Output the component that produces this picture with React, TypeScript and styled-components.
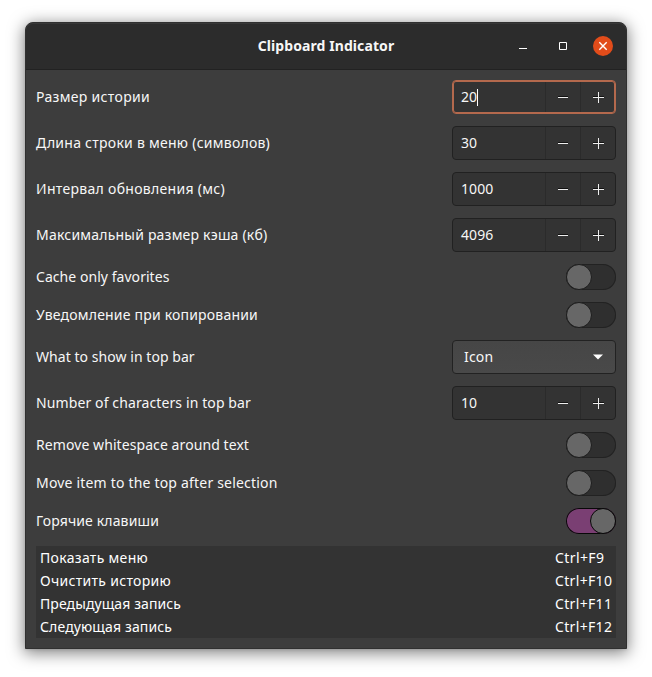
import React from 'react';
import styled, { createGlobalStyle, css } from 'styled-components';

const GlobalStyle = createGlobalStyle`
  * { box-sizing: border-box; }
  body {
    margin: 0;
    background: #fff;
    color: #f7f7f7;
    font: 14px/20px "Noto Sans", "Open Sans", sans-serif;
  }
`;

const Desktop = styled.div`
  width: 652px;
  height: 677px;
  padding: 22px 25px 28px;
  overflow: hidden;
`;

const Window = styled.main`
  height: 627px;
  display: flex;
  flex-direction: column;
  background: #3d3d3d;
  border: 1px solid #303030;
  border-radius: 8px 8px 0 0;
  box-shadow: 0 3px 16px 1px rgba(0, 0, 0, 0.5), 0 1px 3px rgba(0, 0, 0, 0.08);
`;

const TitleBar = styled.header`
  height: 47px;
  flex: none;
  display: grid;
  grid-template-columns: 1fr auto 1fr;
  align-items: center;
  padding-right: 13px;
  padding-left: 13px;
  background: #2c2c2c;
  border-bottom: 1px solid #222;
  border-radius: 7px 7px 0 0;
  box-shadow: inset 0 1px #383838;
`;

const Title = styled.h1`
  grid-column: 2;
  margin: 0;
  font-size: 14px;
  font-weight: 700;
  letter-spacing: 0.08px;
`;

const Controls = styled.div`
  display: flex;
  justify-content: flex-end;
  gap: 20px;
`;

const WindowButton = styled.button<{ $close?: boolean }>`
  width: 20px;
  height: 20px;
  padding: 0;
  border: 0;
  border-radius: 50%;
  background: ${(p) => (p.$close ? '#e24c1a' : 'transparent')};
  svg { display: block; }
`;

const Content = styled.section`
  display: flex;
  flex-direction: column;
  gap: 12px;
  padding: 10px;
`;

const Row = styled.div`
  display: flex;
  align-items: center;
  justify-content: space-between;
`;

const Text = styled.span<{ $tracking?: number }>`
  letter-spacing: ${(p) => p.$tracking ?? 0}px;
  white-space: nowrap;
`;

const SpinBox = styled.div<{ $focused?: boolean }>`
  width: 164px;
  height: 34px;
  display: grid;
  grid-template-columns: 1fr 35px 35px;
  background: #333;
  border: 1px solid #212121;
  border-radius: 4px;
  ${(p) =>
    p.$focused &&
    css`
      border-color: #b4694d;
      box-shadow: inset 0 0 0 1px #b4694d;
    `}
`;

const Value = styled.div`
  display: flex;
  align-items: center;
  padding-left: 8px;
`;

const Caret = styled.span`
  width: 1px;
  height: 17px;
  background: #fff;
`;

const StepButton = styled.button<{ $focused?: boolean }>`
  margin: ${(p) => (p.$focused ? '1px 0' : '0')};
  padding: 0;
  background: none;
  border: 0;
  border-left: 1px solid #2b2b2b;
  display: flex;
  align-items: center;
  justify-content: center;
  svg { display: block; }
`;

const Track = styled.div<{ $on?: boolean }>`
  width: 50px;
  height: 26px;
  display: flex;
  justify-content: ${(p) => (p.$on ? 'flex-end' : 'flex-start')};
  border-radius: 13px;
  background: ${(p) => (p.$on ? '#7a3f73' : '#2f2f2f')};
  box-shadow: inset 0 0 0 1px ${(p) => (p.$on ? '#080808' : '#222')};
`;

const Knob = styled.span<{ $on?: boolean }>`
  width: 26px;
  height: 26px;
  border-radius: 50%;
  background: #676767;
  border: 1px solid ${(p) => (p.$on ? '#080808' : '#1d1d1d')};
`;

const Select = styled.button`
  width: 164px;
  height: 34px;
  display: flex;
  align-items: center;
  justify-content: space-between;
  padding: 0 12px 0 11px;
  color: inherit;
  font: inherit;
  background: linear-gradient(#464646, #494949);
  border: 1px solid #222;
  border-radius: 4px;
`;

const Shortcuts = styled.div`
  background: #333;
`;

const Shortcut = styled.div`
  height: 23px;
  display: grid;
  grid-template-columns: 1fr 57px;
  align-items: center;
  padding: 0 4px;
  color: #fff;
`;

type SpinProps = { label: string; tracking: number; value: string; valueTracking?: number; focused?: boolean };

function SpinRow({ label, tracking, value, valueTracking = 0.1, focused }: SpinProps) {
  return (
    <Row>
      <Text $tracking={tracking}>{label}</Text>
      <SpinBox $focused={focused}>
        <Value>
          <Text $tracking={valueTracking}>{value}</Text>
          {focused && <Caret />}
        </Value>
        <StepButton $focused={focused} aria-label="-">
          <svg width="12" height="12" shapeRendering="crispEdges">
            <path d="M1 5.5h10" stroke="#111" />
            <path d="M1 6.5h10" stroke="#eee" />
          </svg>
        </StepButton>
        <StepButton $focused={focused} aria-label="+">
          <svg width="12" height="12" shapeRendering="crispEdges">
            <path d="M1 5.5h11" stroke="#111" />
            <path d="M1 6.5h11M6.5 1v11" stroke="#eee" />
          </svg>
        </StepButton>
      </SpinBox>
    </Row>
  );
}

function SwitchRow({ label, tracking, on }: { label: string; tracking: number; on?: boolean }) {
  return (
    <Row>
      <Text $tracking={tracking}>{label}</Text>
      <Track $on={on}>
        <Knob $on={on} />
      </Track>
    </Row>
  );
}

const shortcuts = [
  { name: 'Показать меню', tracking: 0.31, keys: 'Ctrl+F9', keyTracking: 0.4 },
  { name: 'Очистить историю', tracking: 0.3, keys: 'Ctrl+F10', keyTracking: 0.34 },
  { name: 'Предыдущая запись', tracking: 0.09, keys: 'Ctrl+F11', keyTracking: 0.34 },
  { name: 'Следующая запись', tracking: 0.13, keys: 'Ctrl+F12', keyTracking: 0.34 },
];

export default function App() {
  return (
    <>
      <GlobalStyle />
      <Desktop>
        <Window>
          <TitleBar>
            <Title>Clipboard Indicator</Title>
            <Controls>
              <WindowButton>
                <svg width="20" height="20"><path d="M6 12.5h8" stroke="#fff" /></svg>
              </WindowButton>
              <WindowButton>
                <svg width="20" height="20"><path d="M6.5 6.5h7v7h-7z" fill="none" stroke="#fff" /></svg>
              </WindowButton>
              <WindowButton $close>
                <svg width="20" height="20"><path d="M6.3 6.3l7.4 7.4M13.7 6.3l-7.4 7.4" stroke="#fff" strokeWidth="1.4" /></svg>
              </WindowButton>
            </Controls>
          </TitleBar>
          <Content>
            <SpinRow label="Размер истории" tracking={0.32} value="20" focused />
            <SpinRow label="Длина строки в меню (символов)" tracking={0.26} value="30" />
            <SpinRow label="Интервал обновления (мс)" tracking={0.3} value="1000" />
            <SpinRow label="Максимальный размер кэша (кб)" tracking={0.21} value="4096" />
            <SwitchRow label="Cache only favorites" tracking={0.05} />
            <SwitchRow label="Уведомление при копировании" tracking={0.2} />
            <Row>
              <Text $tracking={0.05}>What to show in top bar</Text>
              <Select>
                <Text $tracking={0.2}>Icon</Text>
                <svg width="10" height="6"><path d="M0 .5h10l-5 5z" fill="#fff" /></svg>
              </Select>
            </Row>
            <SpinRow label="Number of characters in top bar" tracking={0.11} value="10" />
            <SwitchRow label="Remove whitespace around text" tracking={0.08} />
            <SwitchRow label="Move item to the top after selection" tracking={0.19} />
            <SwitchRow label="Горячие клавиши" tracking={0.14} on />
            <Shortcuts>
              {shortcuts.map((s) => (
                <Shortcut key={s.keys}>
                  <Text $tracking={s.tracking}>{s.name}</Text>
                  <Text $tracking={s.keyTracking}>{s.keys}</Text>
                </Shortcut>
              ))}
            </Shortcuts>
          </Content>
        </Window>
      </Desktop>
    </>
  );
}
